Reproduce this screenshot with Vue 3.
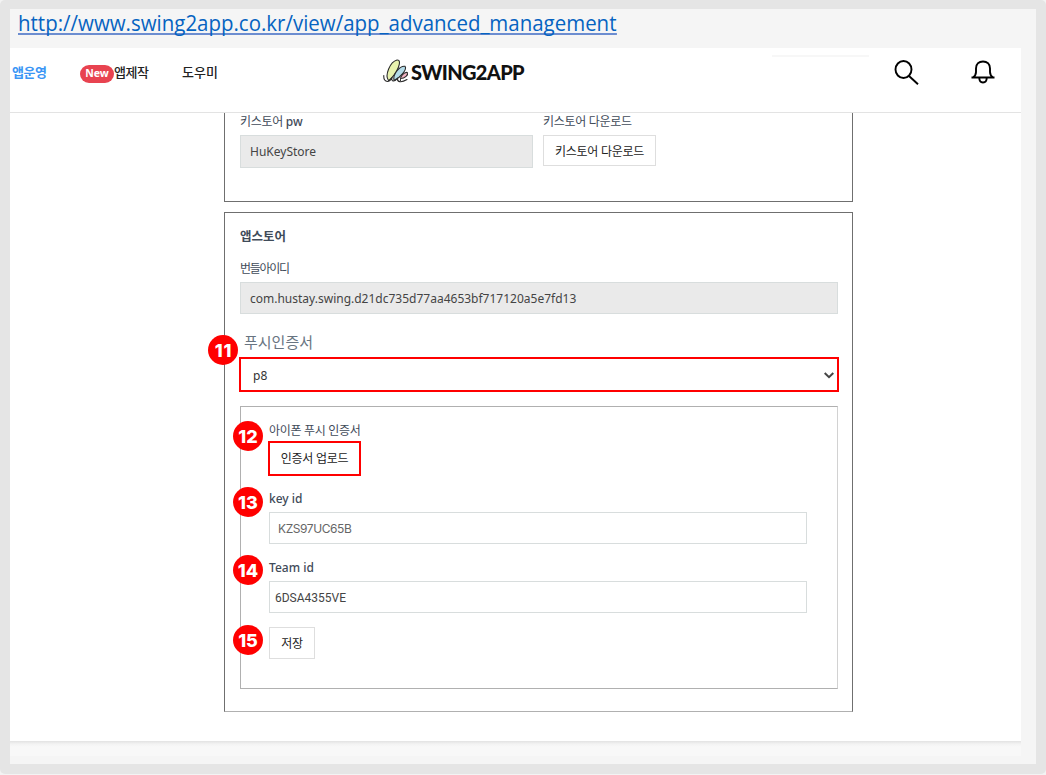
<script setup>
const steps = [
  { n: 11, cls: 's11' },
  { n: 12, cls: 's12' },
  { n: 13, cls: 's13' },
  { n: 14, cls: 's14' },
  { n: 15, cls: 's15' },
]
</script>

<template>
  <div class="frame">
    <div class="sheet">
      <div class="urlbar"><a class="url">http://www.swing2app.co.kr/view/app_advanced_management</a></div>
      <div class="page">
        <header class="header">
          <nav class="nav">
            <span class="active">앱운영</span>
            <span class="make"><b class="new">New</b><span>앱제작</span></span>
            <span class="help">도우미</span>
          </nav>
          <div class="logo">
            <svg width="28" height="26" viewBox="0 0 28 26" fill="none" stroke="#2b2b2b" stroke-width="1.1" stroke-linecap="round">
              <path d="M5.500 22.500C1.500 17 7 4 14 2C20 1.500 14.500 15 6 22.500" fill="#e8f2ae" />
              <path d="M11 22.500C9.500 16 17 7.500 22 8.300C24.500 11 17.500 19.500 11 22.500" fill="#b5dce9" />
              <path d="M17.500 22.500C16.500 18.500 21.500 13.800 24.300 14.500C25.500 17 22 20.500 17.500 20.500" fill="#f3b3c3" />
              <path d="M.8 17.500C.6 20 1.500 23 4.500 23.500C7 23.500 8 21.500 9 19.500C8 23.500 11 24.500 14.500 20.500C14 24 18 25 24 21.500" />
            </svg>
            <span class="brand">SWING2APP</span>
          </div>
          <i class="trace"></i>
          <svg class="search" width="26" height="26" viewBox="0 0 26 26" fill="none" stroke="#000" stroke-width="1.9">
            <ellipse cx="9.500" cy="9.500" rx="8" ry="8.500" />
            <path d="M15 16L24 24.300" />
          </svg>
          <svg class="bell" width="24" height="24" viewBox="0 0 24 24" fill="none" stroke="#000" stroke-width="1.9">
            <path d="M.5 17.500H23.500M2 17.500C4 16 5 14.500 5 12V8.500C5 4 8 1.500 12 1.500S19 4 19 8.500V12C19 14.500 20 16 22 17.500M8.300 18C8.300 24 15.700 24 15.700 18" />
          </svg>
        </header>
        <main class="content">
          <section class="card keystore">
            <div>
              <div class="label">키스토어 <span class="latin">pw</span></div>
              <div class="input gray keyval"><span>HuKeyStore</span></div>
            </div>
            <div>
              <div class="label">키스토어 다운로드</div>
              <button class="btn download">키스토어 다운로드</button>
            </div>
          </section>
          <section class="card appstore">
            <h2>앱스토어</h2>
            <div class="label bundle-label">번들아이디</div>
            <div class="input gray bundle"><span>com.hustay.swing.d21dc735d77aa4653bf717120a5e7fd13</span></div>
            <div class="push-label">푸시인증서</div>
            <div class="select">
              <span>p8</span>
              <svg width="10" height="7" viewBox="0 0 10 7" fill="none" stroke="#454545" stroke-width="2"><path d="M.7 1L5 5.200L9.300 1" /></svg>
            </div>
            <div class="cert">
              <div class="label">아이폰 푸시 인증서</div>
              <button class="btn upload">인증서 업로드</button>
              <div class="label latin key-label">key id</div>
              <div class="input field keyid"><span>KZS97UC65B</span></div>
              <div class="label latin team-label">Team id</div>
              <div class="input field teamid"><span>6DSA4355VE</span></div>
              <button class="btn save">저장</button>
            </div>
          </section>
        </main>
      </div>
      <div class="footer"></div>
    </div>
    <b v-for="s in steps" :key="s.n" class="badge" :class="s.cls">{{ s.n }}</b>
  </div>
</template>

<style>
body { background: #f3f3f3; overflow: hidden; }
</style>

<style scoped>
* { box-sizing: border-box; }
.frame { position: relative; width: 1046px; height: 774px; padding: 9px 10px 10px; background: #e5e5e5; border-radius: 5px; font-family: "Noto Sans", "Noto Sans CJK KR", sans-serif; }
.sheet { height: 755px; background: #f5f5f5; }
.urlbar { height: 39px; padding-left: 8px; }
.url { display: inline-block; font: 22px/27px "Open Sans", sans-serif; height: 26px; color: #0563c1; border-bottom: 2px solid #6c8dd0; white-space: nowrap; transform: scaleX(.93); transform-origin: 0 0; }
.page { width: 1011px; height: 693px; background: #fff; }
.header { height: 65px; border-bottom: 1px solid #e3e3e3; display: flex; }
.nav { display: flex; flex: none; width: 373px; padding-left: 2px; font-size: 13px; line-height: 20px; padding-top: 14px; color: #222; white-space: nowrap; font-weight: 500; letter-spacing: -.4px; }
.active { width: 68px; color: #3b96f5; font-weight: 700; }
.make { display: flex; width: 102px; }
.help { letter-spacing: 0; }
.new { width: 34px; height: 18px; margin-top: 3px; border-radius: 9px; background: #e84350; color: #fff; font-size: 10.5px; line-height: 17px; text-align: center; letter-spacing: 0; }
.logo { display: flex; flex: none; width: 389px; height: 28px; padding-top: 10px; }
.brand { font: 900 20px/28px Lato, sans-serif; color: #111; letter-spacing: -.65px; }
.logo svg { flex: none; }
.trace { flex: none; width: 97px; height: 2px; margin-top: 7px; background: #f7f7f7; }
.search { margin: 12px 0 0 25px; flex: none; }
.bell { margin: 12px 0 0 51px; flex: none; }
.content { width: 629px; margin-left: 214px; }
.card { border: 1px solid #6f6f6f; padding: 0 15px; }
.keystore { height: 89px; border-top: 0; display: flex; gap: 10px; }
.label { height: 16px; font-size: 12px; line-height: 18px; color: #3f4b59; white-space: nowrap; letter-spacing: -.3px; }
.latin { letter-spacing: 0; font-weight: 500; }
.input { display: flex; align-items: center; border: 1px solid #d8dddd; font-size: 12px; color: #444; white-space: nowrap; }
.gray { background: #eaeaea; padding-left: 9px; }
.keyval { width: 293px; height: 33px; margin-top: 6px; }
.btn { display: block; padding: 2px 0 0; border: 1px solid #dedede; background: #fff; color: #222; font: 12px/16px "Noto Sans", "Noto Sans CJK KR", sans-serif; letter-spacing: -.25px; text-align: center; white-space: nowrap; }
.download { width: 113px; height: 31px; margin-top: 6px; }
.appstore { height: 500px; margin-top: 10px; padding-top: 14px; border-bottom-color: #b0b0b0; }
h2 { margin: 0; height: 18px; font-size: 12.5px; line-height: 20px; color: #3f4b59; }
.bundle-label { margin-top: 15px; letter-spacing: -1.3px; }
.bundle { height: 32px; margin-top: 6px; width: 598px; }
.push-label { height: 20px; margin: 19px 0 0 4px; font-size: 15px; line-height: 19px; color: #687481; }
.select { width: 600px; height: 35px; margin: 4px 0 0 -1px; border: 2px solid #f00; display: flex; align-items: center; justify-content: space-between; padding: 2px 3px 0 12px; font-size: 12px; color: #333; }
.cert { width: 598px; height: 283px; margin-top: 14px; padding: 15px 0 0 28px; border: 1px solid #b0b0b0; border-right-color: #d2d2d2; }
.upload { width: 93px; height: 35px; margin: 3px 0 0 -1px; padding-top: 1px; border: 2px solid #f00; }
.key-label { margin-top: 14px; }
.field { width: 538px; height: 32px; }
.keyid { margin-top: 6px; padding-left: 8px; font-family: Inter, sans-serif; color: #666; letter-spacing: -.42px; }
.team-label { margin-top: 15px; }
.teamid { margin-top: 6px; padding: 1px 0 0 5px; font-family: Roboto, sans-serif; }
.save { width: 46px; height: 32px; margin-top: 14px; }
.footer { width: 1011px; height: 15px; background: linear-gradient(#e2e2e2, #f3f3f3 3px, #f8f8f8 6px); }
.badge { position: absolute; width: 30px; height: 30px; border-radius: 50%; background: #f00; color: #fff; font: 800 18px/31px Inter, sans-serif; text-align: center; left: 233px; }
.s11 { left: 208px; top: 335px; letter-spacing: .8px; padding-left: 1px; }
.s12 { top: 421px; }
.s13 { top: 487px; }
.s14 { top: 555px; }
.s15 { top: 625px; }
</style>
